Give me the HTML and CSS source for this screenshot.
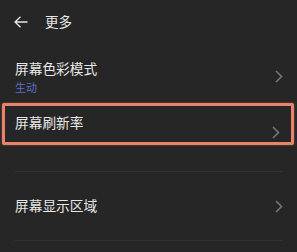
FILE: index.html
```html
<!DOCTYPE html>
<html lang="zh-CN">
<head>
<meta charset="utf-8">
<link rel="stylesheet" href="styles.css">
</head>
<body>
<div class="header">
  <svg class="back" width="14" height="12" viewBox="0 0 14 12"><path d="M13.5 6H1M6.5 0.8L1 6l5.5 5.2" fill="none" stroke="#e6e6e6" stroke-width="1.3"/></svg>
  <span class="title">更多</span>
</div>
<div class="list">
  <div class="row first">
    <div class="texts">
      <div class="label">屏幕色彩模式</div>
      <div class="sub">生动</div>
    </div>
    <svg class="chev" width="8" height="13" viewBox="0 0 8 13"><path d="M1 1l5.5 5.5L1 12" fill="none" stroke="#777" stroke-width="1.5"/></svg>
  </div>
  <div class="highlight">
    <div class="hl-inner">
      <div class="label">屏幕刷新率</div>
      <svg class="chev low" width="8" height="13" viewBox="0 0 8 13"><path d="M1 1l5.5 5.5L1 12" fill="none" stroke="#777" stroke-width="1.5"/></svg>
    </div>
  </div>
  <div class="divider"></div>
  <div class="row third">
    <div class="label">屏幕显示区域</div>
    <svg class="chev" width="8" height="13" viewBox="0 0 8 13"><path d="M1 1l5.5 5.5L1 12" fill="none" stroke="#777" stroke-width="1.5"/></svg>
  </div>
  <div class="divider"></div>
</div>
</body>
</html>
```
FILE: styles.css
```css
html, body {
  margin: 0;
  padding: 0;
  background: #262626;
}
body {
  width: 297px;
  height: 252px;
  overflow: hidden;
  font-family: "Noto Sans CJK SC", "Noto Sans", sans-serif;
  color: #e8e8e8;
}
.header {
  height: 42px;
  display: flex;
  align-items: center;
  padding-left: 14px;
}
.back {
  margin-right: 17px;
  margin-top: 1px;
}
.title {
  font-size: 13.5px;
  line-height: 20px;
}
.list {
  padding: 0 14px 0 15px;
}
.row {
  display: flex;
  align-items: center;
  justify-content: space-between;
}
.first {
  padding-top: 16px;
}
.label {
  font-size: 13.7px;
  line-height: 20px;
}
.sub {
  font-size: 11px;
  line-height: 14px;
  margin-top: 2px;
  color: #5b6fc4;
}
.highlight {
  margin: 9px -11px 0 -13px;
  height: 36px;
  border: 3px solid #e8836a;
  border-radius: 2px;
  box-shadow: 0 0 2px rgba(232, 131, 106, 0.6);
}
.hl-inner {
  height: 36px;
  box-sizing: border-box;
  padding: 6px 11px 0 10px;
  display: flex;
  justify-content: space-between;
  align-items: flex-start;
}
.chev.low {
  margin-top: 14px;
}
.divider {
  height: 1px;
  background: #323232;
}
.highlight + .divider {
  margin-top: 26px;
}
.third {
  height: 68px;
}
.third .label {
  margin-top: -3px;
}
```
